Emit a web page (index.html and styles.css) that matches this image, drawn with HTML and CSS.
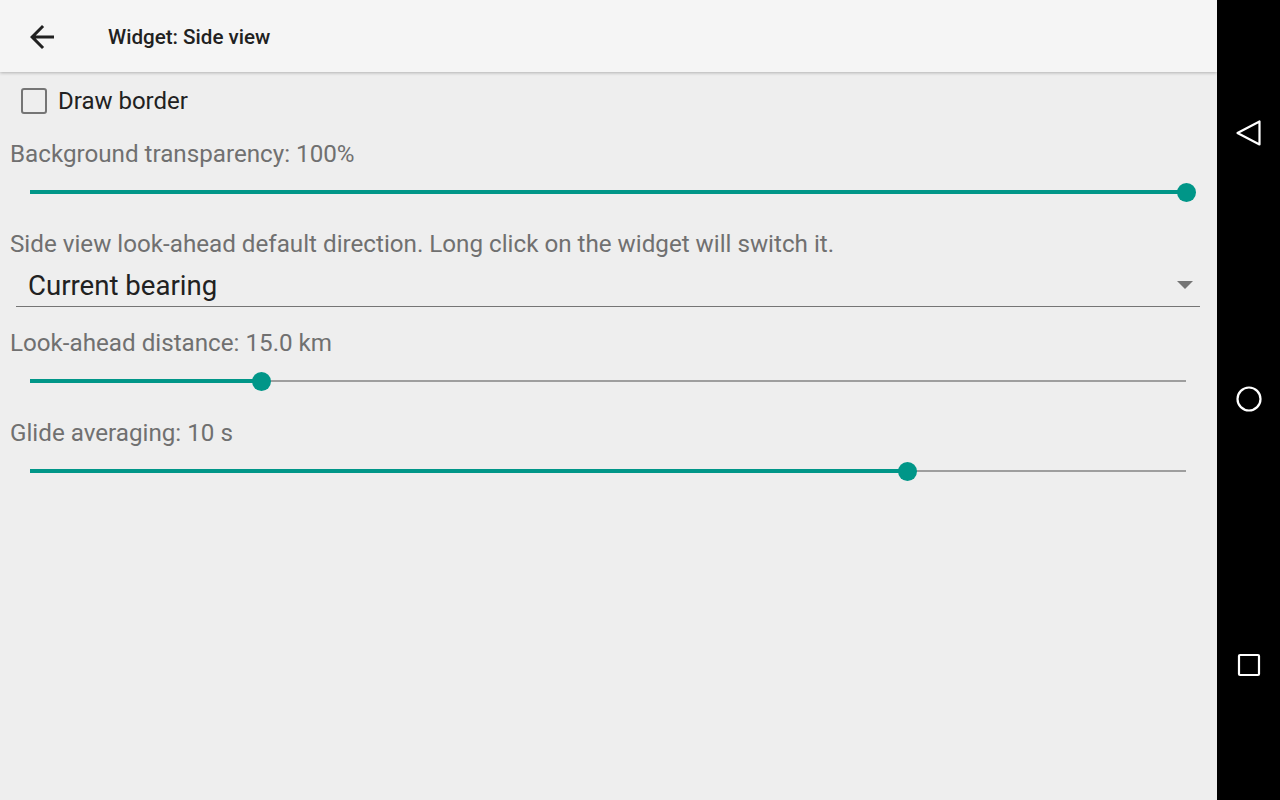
FILE: index.html
```html
<!DOCTYPE html>
<html lang="en">
<head>
    <meta charset="UTF-8">
    <title>Widget: Side view</title>
    <link rel="stylesheet" href="styles.css">
</head>
<body>
    <div class="screen">
        <!-- Main app area -->
        <div class="app">
            <div class="toolbar">
                <svg class="back-icon" viewBox="0 0 24 24" width="36" height="36">
                    <path d="M20 11H7.83l5.59-5.59L12 4l-8 8 8 8 1.41-1.41L7.83 13H20v-2z" fill="#212121"/>
                </svg>
                <span class="toolbar-title">Widget: Side view</span>
            </div>

            <div class="content">
                <!-- Draw border -->
                <div class="check-row">
                    <span class="checkbox"></span>
                    <span class="check-label">Draw border</span>
                </div>

                <!-- Background transparency -->
                <div class="setting first">
                    <div class="setting-label">Background transparency: 100%</div>
                    <div class="slider">
                        <div class="track">
                            <div class="fill" style="width: 100%"></div>
                            <div class="thumb" style="left: 100%"></div>
                        </div>
                    </div>
                </div>

                <!-- Direction spinner -->
                <div class="setting">
                    <div class="setting-label">Side view look-ahead default direction. Long click on the widget will switch it.</div>
                    <div class="spinner">
                        <span class="spinner-value">Current bearing</span>
                        <span class="spinner-arrow"></span>
                    </div>
                </div>

                <!-- Look-ahead distance -->
                <div class="setting spaced">
                    <div class="setting-label">Look-ahead distance: 15.0 km</div>
                    <div class="slider">
                        <div class="track">
                            <div class="fill" style="width: 20%"></div>
                            <div class="thumb" style="left: 20%"></div>
                        </div>
                    </div>
                </div>

                <!-- Glide averaging -->
                <div class="setting">
                    <div class="setting-label">Glide averaging: 10 s</div>
                    <div class="slider">
                        <div class="track">
                            <div class="fill" style="width: 75.87%"></div>
                            <div class="thumb" style="left: 75.87%"></div>
                        </div>
                    </div>
                </div>
            </div>
        </div>

        <!-- Android navigation bar -->
        <div class="navbar">
            <svg viewBox="0 0 26 26" width="26" height="26">
                <path d="M23.5 1.5 L23.5 24.5 L1.5 13 Z" fill="none" stroke="#fff" stroke-width="2.2" stroke-linejoin="round"/>
            </svg>
            <svg viewBox="0 0 26 26" width="26" height="26">
                <circle cx="13" cy="13" r="11.5" fill="none" stroke="#fff" stroke-width="2.2"/>
            </svg>
            <svg viewBox="0 0 26 26" width="26" height="26">
                <rect x="3" y="3" width="20" height="20" rx="1" fill="none" stroke="#fff" stroke-width="2.2"/>
            </svg>
        </div>
    </div>
</body>
</html>
```

FILE: styles.css
```css
/* Basic Reset */
* {
    margin: 0;
    padding: 0;
    box-sizing: border-box;
}

body {
    font-family: Roboto, 'Noto Sans', sans-serif;
    background-color: #000;
    width: 1280px;
    height: 800px;
    overflow: hidden;
}

.screen {
    display: flex;
    height: 800px;
}

/* App area */
.app {
    width: 1217px;
    height: 800px;
    background-color: #eeeeee;
    display: flex;
    flex-direction: column;
}

.toolbar {
    height: 72px;
    background-color: #f5f5f5;
    display: flex;
    align-items: center;
    padding-left: 24px;
    box-shadow: 0 1px 3px rgba(0, 0, 0, 0.25);
    position: relative;
    z-index: 1;
}

.back-icon {
    display: block;
    margin-top: 1px;
}

.toolbar-title {
    margin-left: 48px;
    font-size: 20.6px;
    font-weight: 500;
    color: #212121;
    margin-top: 1px;
}

.content {
    padding: 0 10px;
}

/* Checkbox */
.check-row {
    height: 58px;
    display: flex;
    align-items: center;
    padding-left: 11px;
}

.checkbox {
    width: 26px;
    height: 26px;
    border: 2px solid #757575;
    border-radius: 3px;
}

.check-label {
    margin-left: 11px;
    font-size: 24px;
    color: #212121;
}

/* Settings */
.setting {
    margin-top: 14px;
}

.setting.first {
    margin-top: 10px;
}

.setting.spaced {
    margin-top: 22px;
}

.setting-label {
    font-size: 24.2px;
    line-height: 28px;
    color: #707070;
}

/* Slider */
.slider {
    height: 48px;
    display: flex;
    align-items: center;
    padding: 0 21px 0 20px;
}

.track {
    position: relative;
    width: 100%;
    height: 2px;
    background-color: #9e9e9e;
}

.fill {
    position: absolute;
    left: 0;
    top: -1px;
    height: 4px;
    background-color: #009688;
}

.thumb {
    position: absolute;
    top: 1px;
    width: 19px;
    height: 19px;
    margin: -9.5px 0 0 -9.5px;
    border-radius: 50%;
    background-color: #009688;
}

/* Spinner */
.spinner {
    height: 49px;
    margin: 0 7px 0 6px;
    border-bottom: 1.5px solid #757575;
    display: flex;
    align-items: center;
    justify-content: space-between;
    padding: 6px 7px 0 12px;
}

.spinner-value {
    font-size: 27.6px;
    color: #212121;
}

.spinner-arrow {
    width: 0;
    height: 0;
    border-left: 8px solid transparent;
    border-right: 8px solid transparent;
    border-top: 8px solid #757575;
}

/* Navigation bar */
.navbar {
    width: 63px;
    height: 800px;
    background-color: #000;
    display: flex;
    flex-direction: column;
    align-items: center;
    justify-content: space-between;
    padding: 120px 0 122px 0;
}

.navbar svg {
    display: block;
}
```
